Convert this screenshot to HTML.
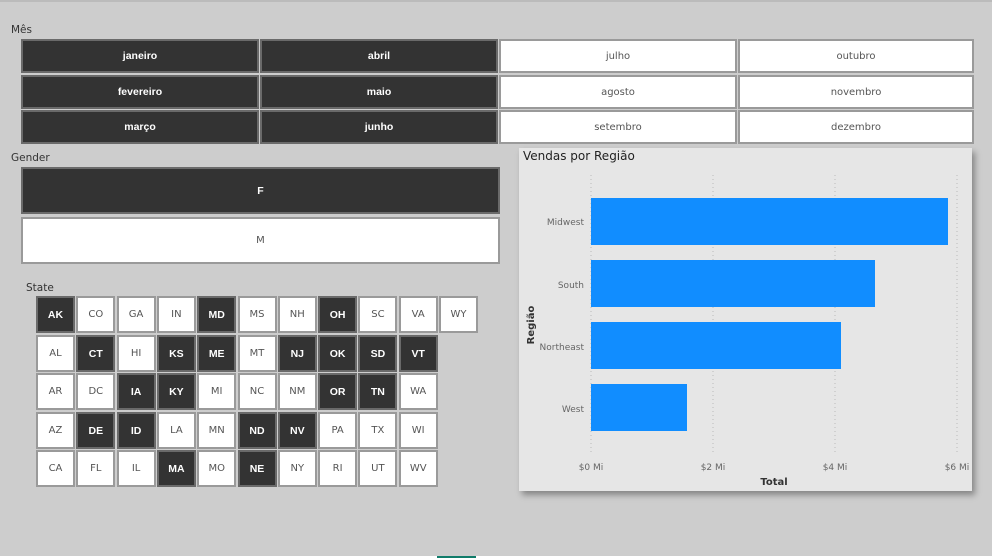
<!DOCTYPE html><html><head><style>
body{margin:0;width:992px;height:558px;background:#cdcdcd;font-family:"DejaVu Sans","Liberation Sans",sans-serif;position:relative;overflow:hidden}
.a{position:absolute;box-sizing:border-box;display:flex;align-items:center;justify-content:center;font-size:10px}
.d{background:#333;color:#fff;border:2px solid #6a6a6a;font-family:"Liberation Sans",sans-serif;font-weight:bold;font-size:10.5px}
.w{background:#fff;color:#555;border:2px solid #9a9a9a}
.l{position:absolute;font-size:10.5px;color:#333}
</style></head><body>
<div style="position:absolute;left:0;top:0;width:992px;height:2px;background:#bbb"></div>
<div class="l" style="left:11px;top:24px">Mês</div>
<div class="a d" style="left:21px;top:39px;width:238px;height:34px">janeiro</div>
<div class="a d" style="left:260px;top:39px;width:238px;height:34px">abril</div>
<div class="a w" style="left:499px;top:39px;width:238px;height:34px">julho</div>
<div class="a w" style="left:738px;top:39px;width:236px;height:34px">outubro</div>
<div class="a d" style="left:21px;top:75px;width:238px;height:34px">fevereiro</div>
<div class="a d" style="left:260px;top:75px;width:238px;height:34px">maio</div>
<div class="a w" style="left:499px;top:75px;width:238px;height:34px">agosto</div>
<div class="a w" style="left:738px;top:75px;width:236px;height:34px">novembro</div>
<div class="a d" style="left:21px;top:110px;width:238px;height:34px">março</div>
<div class="a d" style="left:260px;top:110px;width:238px;height:34px">junho</div>
<div class="a w" style="left:499px;top:110px;width:238px;height:34px">setembro</div>
<div class="a w" style="left:738px;top:110px;width:236px;height:34px">dezembro</div>
<div class="l" style="left:11px;top:152px">Gender</div>
<div class="a d" style="left:21px;top:167px;width:479px;height:47px">F</div>
<div class="a w" style="left:21px;top:217px;width:479px;height:47px">M</div>
<div class="l" style="left:26px;top:282px">State</div>
<div id="st"></div>
<script>
var rows=[["AK1","CO","GA","IN","MD1","MS","NH","OH1","SC","VA","WY"],["AL","CT1","HI","KS1","ME1","MT","NJ1","OK1","SD1","VT1"],["AR","DC","IA1","KY1","MI","NC","NM","OR1","TN1","WA"],["AZ","DE1","ID1","LA","MN","ND1","NV1","PA","TX","WI"],["CA","FL","IL","MA1","MO","NE1","NY","RI","UT","WV"]];
var ys=[296,335,373,412,450],h="";
rows.forEach(function(r,i){r.forEach(function(s,j){var d=s.endsWith("1");h+='<div class="a '+(d?'d':'w')+'" style="left:'+(36+j*40.3)+'px;top:'+ys[i]+'px;width:39px;height:37px">'+(d?s.slice(0,-1):s)+'</div>'})});
document.getElementById("st").innerHTML=h;
</script>
<div style="position:absolute;left:519px;top:148px;width:453px;height:343px;background:#e6e6e6;box-shadow:3px 4px 6px rgba(0,0,0,.35)"></div>
<div class="l" style="left:523px;top:149px;font-size:12px;color:#222">Vendas por Região</div>
<svg style="position:absolute;left:0;top:0" width="992" height="558">
<g stroke="#bbb" stroke-dasharray="1,3"><line x1="591" y1="175" x2="591" y2="455"/><line x1="713" y1="175" x2="713" y2="455"/><line x1="835" y1="175" x2="835" y2="455"/><line x1="957" y1="175" x2="957" y2="455"/></g>
<g fill="#118dff"><rect x="591" y="198" width="357" height="47"/><rect x="591" y="260" width="284" height="47"/><rect x="591" y="322" width="250" height="47"/><rect x="591" y="384" width="96" height="47"/></g>
<g font-family="DejaVu Sans,sans-serif" font-size="9" fill="#666" text-anchor="end"><text x="584" y="225">Midwest</text><text x="584" y="288">South</text><text x="584" y="350">Northeast</text><text x="584" y="412">West</text></g>
<g font-family="DejaVu Sans,sans-serif" font-size="9" fill="#666" text-anchor="middle"><text x="591" y="470">$0 Mi</text><text x="713" y="470">$2 Mi</text><text x="835" y="470">$4 Mi</text><text x="957" y="470">$6 Mi</text></g>
<text x="774" y="485" font-family="DejaVu Sans,sans-serif" font-size="10" font-weight="bold" fill="#333" text-anchor="middle">Total</text>
<text transform="translate(534,325) rotate(-90)" font-family="DejaVu Sans,sans-serif" font-size="10" font-weight="bold" fill="#333" text-anchor="middle">Região</text>
</svg>
<div style="position:absolute;left:0;top:556px;width:992px;height:2px;background:#fff"></div>
<div style="position:absolute;left:437px;top:556px;width:39px;height:2px;background:#107c6a"></div>
</body></html>
